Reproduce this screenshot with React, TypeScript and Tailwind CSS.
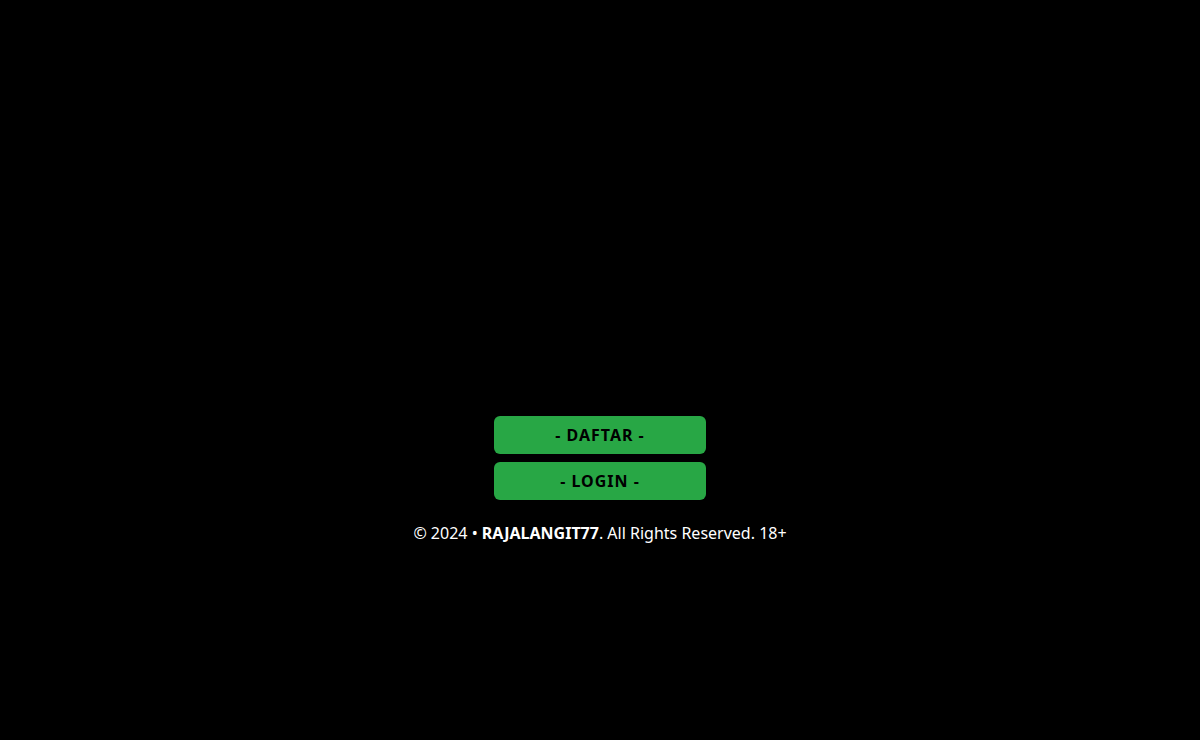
const actions = [
  { label: "- DAFTAR -", href: "#daftar" },
  { label: "- LOGIN -", href: "#login" },
];

export default function App() {
  return (
    <div className="flex min-h-screen flex-col items-center bg-black px-4 pt-[416px] font-['Noto_Sans',sans-serif] text-base text-white">
      <nav className="flex w-full max-w-[212px] flex-col gap-2">
        {actions.map((action) => (
          <a
            key={action.label}
            href={action.href}
            className="rounded-md bg-[#28a745] py-[7px] text-center font-bold tracking-[1px] text-black"
          >
            {action.label}
          </a>
        ))}
      </nav>
      <footer className="mt-[21px] text-center">
        © 2024 • <strong className="font-bold">RAJALANGIT77</strong>. All Rights Reserved. 18+
      </footer>
    </div>
  );
}
